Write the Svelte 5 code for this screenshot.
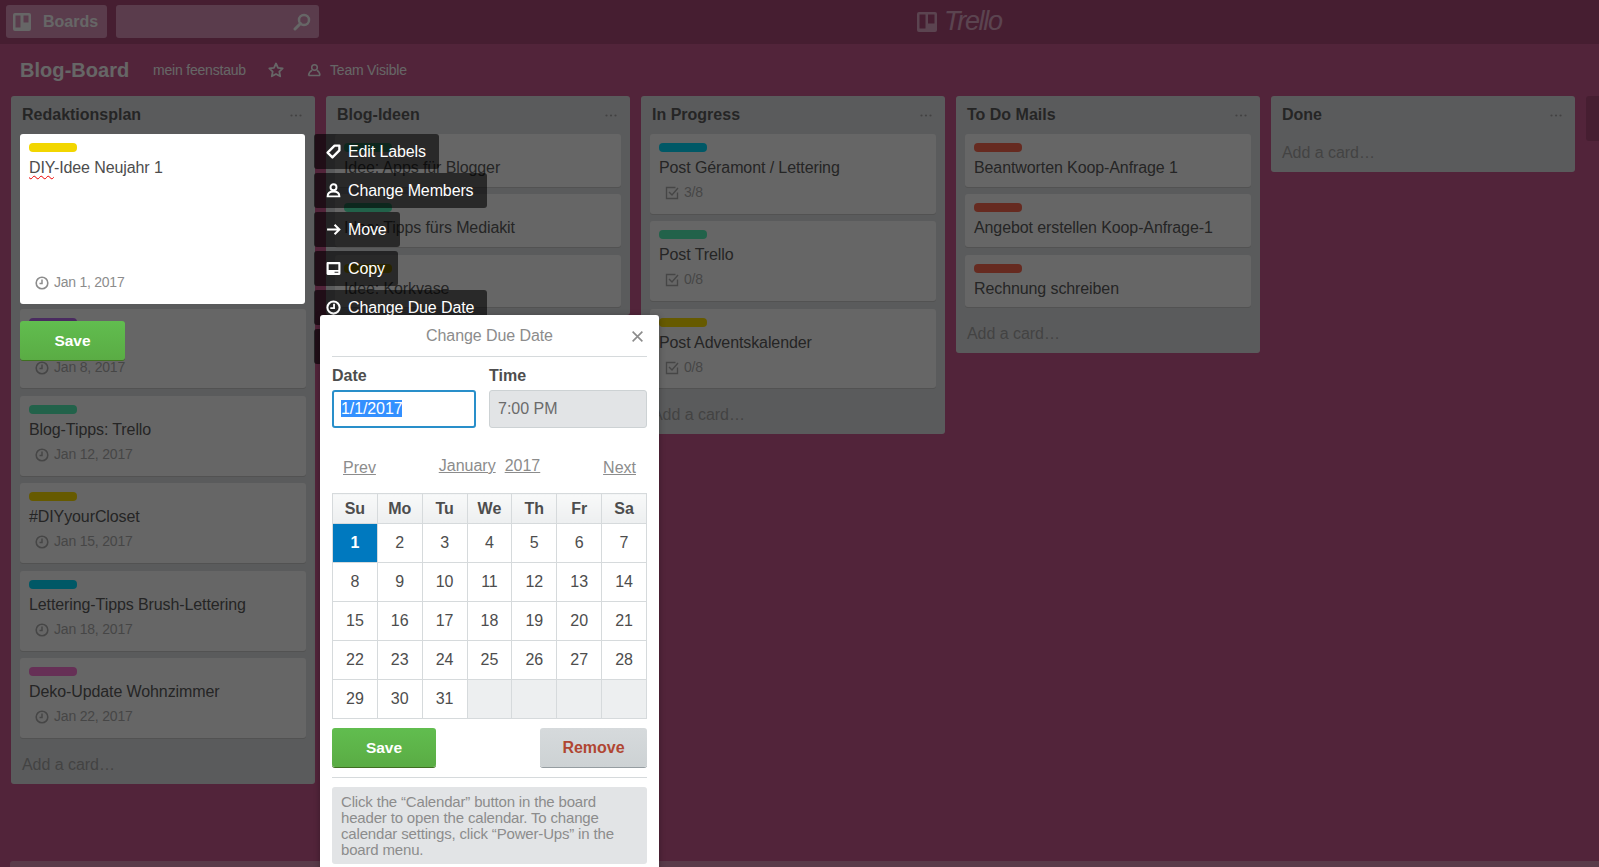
<script>
  const teal = '#00dcff', green = '#55f5b8', gold = '#ffe100', red = '#ff6a50', pink = '#ff78d8', purple = '#b96cf0';
  const lists = [
    { title: 'Redaktionsplan', cards: [
      { spacer: true },
      { color: purple, text: '', date: 'Jan 8, 2017', h: 79 },
      { color: green, text: 'Blog-Tipps: Trello', date: 'Jan 12, 2017', h: 80 },
      { color: gold, text: '#DIYyourCloset', date: 'Jan 15, 2017', h: 80 },
      { color: teal, text: 'Lettering-Tipps Brush-Lettering', date: 'Jan 18, 2017', h: 80 },
      { color: pink, text: 'Deko-Update Wohnzimmer', date: 'Jan 22, 2017', h: 80 }
    ] },
    { title: 'Blog-Ideen', cards: [
      { color: green, text: 'Idee: Apps für Blogger', h: 52.5 },
      { color: green, text: 'Idee: Tipps fürs Mediakit', h: 53 },
      { color: gold, text: 'Idee: Korkvase', h: 52.5 }
    ] },
    { title: 'In Progress', cards: [
      { color: teal, text: 'Post Géramont / Lettering', check: '3/8', h: 79.5 },
      { color: green, text: 'Post Trello', check: '0/8', h: 80 },
      { color: gold, text: 'Post Adventskalender', check: '0/8', h: 79.5 }
    ] },
    { title: 'To Do Mails', cards: [
      { color: red, text: 'Beantworten Koop-Anfrage 1', h: 52.5 },
      { color: red, text: 'Angebot erstellen Koop-Anfrage-1', h: 53 },
      { color: red, text: 'Rechnung schreiben', h: 52.5 }
    ] },
    { title: 'Done', cards: [] }
  ];
  const weekdays = ['Su', 'Mo', 'Tu', 'We', 'Th', 'Fr', 'Sa'];
  const weeks = [[1,2,3,4,5,6,7],[8,9,10,11,12,13,14],[15,16,17,18,19,20,21],[22,23,24,25,26,27,28],[29,30,31,0,0,0,0]];
  const menu = [
    { label: 'Edit Labels', icon: 'label' },
    { label: 'Change Members', icon: 'member' },
    { label: 'Move', icon: 'move' },
    { label: 'Copy', icon: 'copy' },
    { label: 'Change Due Date', icon: 'clock' },
    { label: '', icon: '' }
  ];
</script>

<div class="page">
  <header class="top">
    <div class="boards">
      <svg class="bico" viewBox="0 0 18 18"><path fill-rule="evenodd" d="M2 0h14a2 2 0 0 1 2 2v14a2 2 0 0 1-2 2H2a2 2 0 0 1-2-2V2a2 2 0 0 1 2-2zM2.500 2.500v12h5v-12zM10.500 2.500v7h5v-7z"/></svg>
      <span>Boards</span>
    </div>
    <div class="search">
      <svg viewBox="0 0 18 18"><circle cx="11" cy="7" r="5" fill="none" stroke-width="2.500"/><path d="M7.500 10.500 2 16" fill="none" stroke-width="3" stroke-linecap="round"/></svg>
    </div>
    <div class="logo">
      <svg viewBox="0 0 20 20"><path fill-rule="evenodd" d="M2 0h16a2 2 0 0 1 2 2v16a2 2 0 0 1-2 2H2a2 2 0 0 1-2-2V2a2 2 0 0 1 2-2zM2.500 2.500v14h6v-14zM11 2.500v9h6.500v-9z"/></svg>
      <span>Trello</span>
    </div>
  </header>

  <div class="boardhead">
    <h1>Blog-Board</h1>
    <span class="team">mein feenstaub</span>
    <svg class="star" viewBox="0 0 16 16"><path d="M8 1.500l2 4.300 4.700.6-3.400 3.200.9 4.700L8 12l-4.200 2.300.9-4.700L1.300 6.400 6 5.800z" fill="none" stroke-width="1.800" stroke-linejoin="round"/></svg>
    <svg class="vis" viewBox="0 0 14 14"><circle cx="7.500" cy="4.500" r="2.800" fill="none" stroke-width="1.500"/><path d="M1.500 12.500c.5-3 2-4.500 3.500-5M13 12.500c-.3-3-1.700-4.500-3-5M1.500 12.500H13" fill="none" stroke-width="1.500"/></svg>
    <span class="vistxt">Team Visible</span>
  </div>

  <main class="lists">
    {#each lists as l, li}
      <section class="list">
        <div class="lhead">
          <h2>{l.title}</h2>
          <svg class="dots" viewBox="0 0 12 3"><circle cx="1.500" cy="1.500" r="1.100"/><circle cx="6" cy="1.500" r="1.100"/><circle cx="10.500" cy="1.500" r="1.100"/></svg>
        </div>
        {#if l.cards.length}
          <div class="cards">
            {#each l.cards as c}
              {#if c.spacer}
                <div class="spacer"></div>
              {:else}
                <article class="card" style="height:{c.h}px">
                  <i class="label" style="background:{c.color}"></i>
                  <div class="ctext">{c.text}</div>
                  {#if c.date}
                    <div class="meta">
                      <svg viewBox="0 0 14 14"><circle cx="7" cy="7" r="5.800" fill="none" stroke-width="1.600"/><path d="M7 3.500V7.500H4.500" fill="none" stroke-width="1.500"/></svg>
                      <span>{c.date}</span>
                    </div>
                  {/if}
                  {#if c.check}
                    <div class="meta">
                      <svg viewBox="0 0 14 14"><path d="M12.500 6.500v6H1.500v-11h9" fill="none" stroke-width="1.400"/><path d="M4 6l3 3 6-7" fill="none" stroke-width="1.500"/></svg>
                      <span>{c.check}</span>
                    </div>
                  {/if}
                </article>
              {/if}
            {/each}
          </div>
        {/if}
        {#if li !== 1}
          <div class="add">Add a card…</div>
        {/if}
      </section>
    {/each}
    <div class="stub"></div>
  </main>

  <div class="scroll"></div>
  <div class="overlay"></div>

  <div class="editcard">
    <i class="label yellow"></i>
    <div class="ctext solid"><span class="spell">DIY</span>-Idee Neujahr 1</div>
    <div class="editmeta">
      <svg viewBox="0 0 14 14"><circle cx="7" cy="7" r="5.800" fill="none" stroke="#8c8c8c" stroke-width="1.600"/><path d="M7 3.500V7.500H4.500" fill="none" stroke="#8c8c8c" stroke-width="1.500"/></svg>
      <span>Jan 1, 2017</span>
    </div>
  </div>
  <button class="cardsave">Save</button>

  <div class="menu">
    {#each menu as m}
      <div class="mitem">
        {#if m.icon === 'label'}
          <svg viewBox="0 0 14 14"><path d="M8 1.500h4.500V6L6 12.500 1.500 8z" fill="none" stroke="#fff" stroke-width="2.200" stroke-linejoin="round"/></svg>
        {:else if m.icon === 'member'}
          <svg viewBox="0 0 14 14"><circle cx="7" cy="4" r="2.800" fill="none" stroke="#fff" stroke-width="1.800"/><path d="M1.500 12.500c0-3 2-4.500 5.500-4.500s5.500 1.500 5.500 4.500z" fill="none" stroke="#fff" stroke-width="1.800"/></svg>
        {:else if m.icon === 'move'}
          <svg viewBox="0 0 14 14"><path d="M1 7h11M8 2.500 12.500 7 8 11.500" fill="none" stroke="#fff" stroke-width="1.900"/></svg>
        {:else if m.icon === 'copy'}
          <svg viewBox="0 0 14 14"><path fill="#fff" fill-rule="evenodd" d="M1.500 1h11a1 1 0 0 1 1 1v10a1 1 0 0 1-1 1h-11a1 1 0 0 1-1-1V2a1 1 0 0 1 1-1zM2.500 3v5.500h9V3zM8 10v1h3.500v-1z"/></svg>
        {:else if m.icon === 'clock'}
          <svg viewBox="0 0 14 14"><circle cx="7" cy="7" r="5.700" fill="none" stroke="#fff" stroke-width="1.900"/><path d="M7.500 3.500V7.500H4" fill="none" stroke="#fff" stroke-width="1.700"/></svg>
        {/if}
        <span>{m.label}</span>
      </div>
    {/each}
  </div>

  <div class="pop">
    <div class="ptitle">Change Due Date
      <svg class="close" viewBox="0 0 12 12"><path d="M1.500 1.500l9 9M10.500 1.500l-9 9" fill="none" stroke="#8c8c8c" stroke-width="1.500"/></svg>
    </div>
    <div class="fields">
      <div class="f">Date<span class="inp focus"><span class="sel">1/1/2017</span></span></div>
      <div class="f">Time<span class="inp off">7:00 PM</span></div>
    </div>
    <div class="nav">
      <span class="lnk">Prev</span>
      <span class="navmid"><span class="lnk">January</span><span class="lnk">2017</span></span>
      <span class="lnk">Next</span>
    </div>
    <table>
      <thead><tr>{#each weekdays as d}<th>{d}</th>{/each}</tr></thead>
      <tbody>
        {#each weeks as w}
          <tr>
            {#each w as d}
              <td class:today={d === 1} class:empty={d === 0}>{d || ''}</td>
            {/each}
          </tr>
        {/each}
      </tbody>
    </table>
    <div class="actions">
      <button class="save">Save</button>
      <button class="remove">Remove</button>
    </div>
    <div class="note">Click the “Calendar” button in the board header to open the calendar. To change calendar settings, click “Power-Ups” in the board menu.</div>
  </div>
</div>

<style>
  :global(body) { margin: 0; background: #52243a; font-family: "Liberation Sans", Arial, sans-serif; overflow: hidden; }
  .page { position: relative; width: 1599px; height: 867px; overflow: hidden; background: #cd5a91; }
  h1, h2 { margin: 0; }
  .top { position: relative; height: 44px; background: #ae4c7b; display: flex; align-items: center; padding: 0 6px; gap: 9px; box-sizing: border-box; }
  .boards { width: 101px; height: 33px; border-radius: 3px; background: #e096be; display: flex; align-items: center; box-sizing: border-box; padding-left: 7px; gap: 12px; color: #fff; font-weight: 700; font-size: 16px; margin-top: -1px; }
  .bico { width: 18px; height: 18px; fill: #fff; }
  .search { width: 203px; height: 33px; border-radius: 3px; background: #e096be; display: flex; align-items: center; justify-content: flex-end; padding-right: 8px; box-sizing: border-box; margin-top: -1px; }
  .search svg { width: 18px; height: 18px; stroke: #fff; }
  .logo { position: absolute; left: 917px; top: 8px; display: flex; align-items: flex-start; gap: 7px; color: #e4aac8; }
  .logo svg { width: 20px; height: 20px; fill: #e4aac8; margin-top: 4px; }
  .logo span { font-style: italic; font-size: 27px; letter-spacing: -1.3px; line-height: 26px; }
  .boardhead { height: 52px; display: flex; align-items: center; color: #fff; padding-left: 20px; }
  .boardhead h1 { font-size: 20px; line-height: 26px; width: 133px; letter-spacing: .05px; }
  .team { font-size: 14px; letter-spacing: -.2px; width: 112px; }
  .star { width: 16px; height: 16px; stroke: #fff; margin: 0 23px 0 3px; }
  .vis { width: 14px; height: 14px; stroke: #fff; margin-right: 9px; }
  .vistxt { font-size: 14px; letter-spacing: -.2px; }
  .lists { display: flex; align-items: flex-start; gap: 11px; padding-left: 11px; }
  .list { width: 304px; flex: none; background: #e2e4e6; border-radius: 3px; padding: 0 9px; box-sizing: border-box; }
  .lhead { height: 38px; display: flex; align-items: center; justify-content: space-between; padding: 0 2px; box-sizing: border-box; }
  .lhead h2 { font-size: 16px; line-height: 20px; color: #5e5e5e; }
  .dots { width: 12px; height: 3px; fill: #a6a6a6; margin-right: 2px; }
  .cards { display: flex; flex-direction: column; gap: 7.5px; margin-bottom: 8px; }
  .spacer { height: 167.5px; }
  .card { background: #fff; border-radius: 3px; box-shadow: 0 1px 0 #ccc; padding: 9px 9px 0; box-sizing: border-box; }
  .label { display: block; width: 48px; height: 9px; border-radius: 4px; }
  .ctext { font-size: 16px; line-height: 20px; min-height: 20px; margin-top: 6px; color: #5e5e5e; letter-spacing: -.1px; }
  .solid { color: #4d4d4d; }
  .meta { display: flex; align-items: center; gap: 5px; margin-top: 5px; padding-left: 6px; font-size: 14px; color: #b0b0b0; line-height: 18px; letter-spacing: -.2px; }
  .meta svg { width: 14px; height: 14px; stroke: #b0b0b0; margin-top: 2px; }
  .add { height: 38px; display: flex; align-items: center; color: #a8a8a8; font-size: 16px; padding-left: 2px; letter-spacing: -.05px; }
  .stub { flex: none; width: 40px; height: 45px; background: #ae4c7b; border-radius: 3px 0 0 3px; }
  .scroll { position: absolute; left: 10px; right: 0; bottom: 0; height: 6px; background: rgba(255,255,255,.35); border-radius: 3px 0 0 0; }
  .overlay { position: absolute; inset: 0; background: rgba(0,0,0,.6); }
  .editcard { position: absolute; left: 20px; top: 134px; width: 285px; height: 170px; background: #fff; border-radius: 3px; padding: 9px 9px 0; box-sizing: border-box; }
  .yellow { background: #f2d600; }
  .spell { text-decoration: underline wavy #e00; text-decoration-thickness: 1px; text-underline-offset: 2px; }
  .editmeta { position: absolute; left: 15px; top: 140px; display: flex; align-items: center; gap: 5px; font-size: 14px; color: #8c8c8c; letter-spacing: -.25px; }
  .editmeta svg { width: 14px; height: 14px; margin-top: 2px; }
  .cardsave { position: absolute; left: 20px; top: 321px; width: 105px; height: 39px; }
  button { border: 0; border-radius: 3px; font-family: inherit; font-weight: 700; font-size: 16px; padding: 0; }
  .cardsave, .save { background: linear-gradient(#61bd4f, #5aac44); box-shadow: 0 1px 0 #3f6f21; color: #fff; font-size: 15.5px; }
  .menu { position: absolute; left: 314px; top: 134px; display: flex; flex-direction: column; gap: 4px; align-items: flex-start; }
  .mitem { height: 35px; background: rgba(0,0,0,.6); border-radius: 3px; display: flex; align-items: center; color: #fff; font-size: 16px; letter-spacing: -.12px; padding: 0 13px 0 12px; gap: 7px; }
  .mitem:last-child { width: 1px; }
  .mitem svg { width: 15px; height: 15px; flex: none; }
  .pop { position: absolute; left: 320px; top: 315px; width: 339px; height: 560px; background: #fff; border-radius: 3px; padding: 0 12px; box-sizing: border-box; box-shadow: 0 1px 6px rgba(0,0,0,.3); }
  .ptitle { position: relative; height: 41px; line-height: 42px; text-align: center; font-size: 16px; color: #8c8c8c; border-bottom: 1px solid #d6dadc; letter-spacing: -.08px; }
  .close { position: absolute; right: 3px; top: 15px; width: 13px; height: 13px; }
  .fields { display: flex; justify-content: space-between; margin-top: 10px; }
  .f { display: flex; flex-direction: column; font-weight: 700; font-size: 16px; color: #4d4d4d; line-height: 18px; }
  .inp { display: block; box-sizing: border-box; height: 38px; margin-top: 5px; border-radius: 3px; font-weight: 400; line-height: 35px; padding-left: 8px; font-size: 16px; }
  .focus { width: 144px; border: 2px solid #298fca; padding-left: 7px; color: #fff; line-height: 34px; letter-spacing: -.1px; }
  .sel { background: #3390ff; }
  .off { width: 158px; background: #e2e4e6; border: 1px solid #cdd2d4; color: #6b6b6b; }
  .nav { display: flex; align-items: center; justify-content: space-between; height: 65px; padding: 15px 11px 0; box-sizing: border-box; color: #8c8c8c; font-size: 16px; }
  .lnk { text-decoration: underline; }
  .navmid { display: flex; gap: 9px; margin-top: -4px; }
  table { border-collapse: collapse; width: 315px; table-layout: fixed; }
  th, td { border: 1px solid #d6dadc; text-align: center; font-size: 16px; color: #4d4d4d; padding: 0; }
  th { height: 29px; background: linear-gradient(#f8f9f9, #edeff0); font-weight: 700; }
  td { height: 38px; font-weight: 400; }
  td.today { background: #0079bf; color: #fff; font-weight: 700; }
  td.empty { background: #edeff0; }
  .actions { display: flex; justify-content: space-between; margin-top: 9px; padding-bottom: 10px; border-bottom: 1px solid #d6dadc; }
  .save { width: 104px; height: 39px; }
  .remove { width: 107px; height: 39px; background: linear-gradient(#d6dadc, #cdd2d4); box-shadow: 0 1px 0 #959da1; color: #b04632; }
  .note { margin-top: 9px; background: #e2e4e6; border-radius: 3px; padding: 7px 9px; font-size: 15px; line-height: 16px; color: #8c8c8c; height: 77px; box-sizing: border-box; letter-spacing: -.17px; }
</style>
